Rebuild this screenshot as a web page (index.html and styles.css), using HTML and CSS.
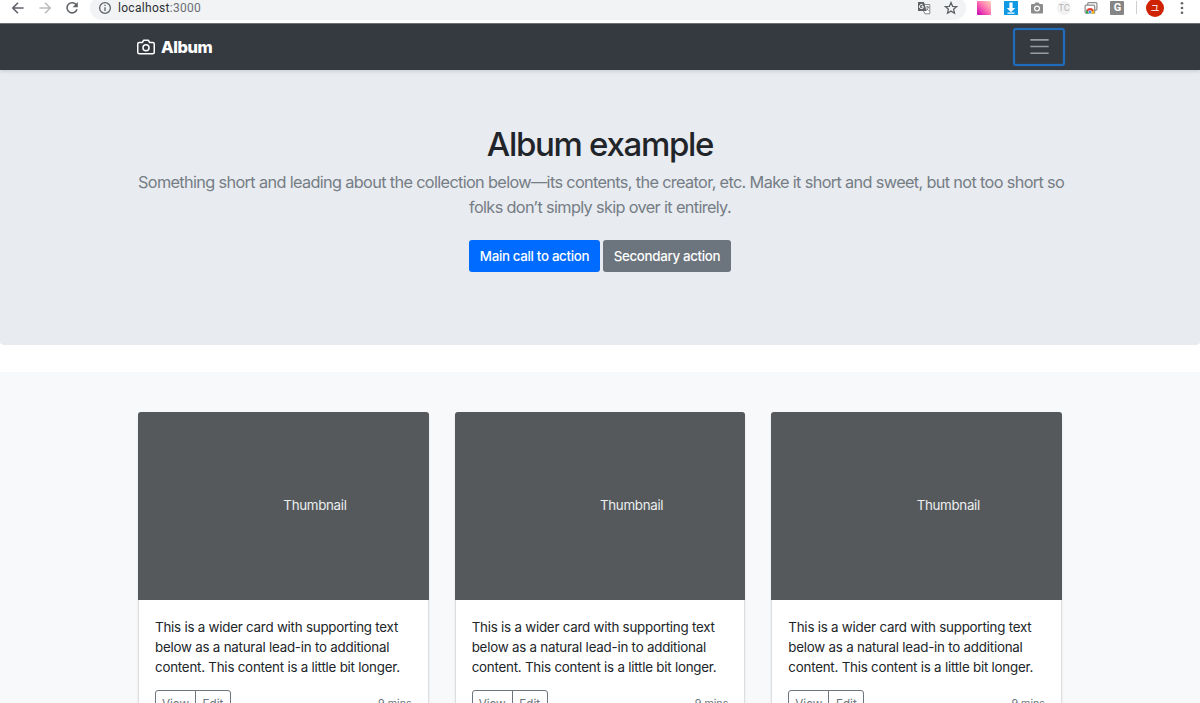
FILE: index.html
```
<!DOCTYPE html>
<html lang="en">
<head>
  <meta charset="UTF-8">
  <meta name="viewport" content="width=device-width, initial-scale=1.0">
  <title>Album example</title>
  <link rel="stylesheet" href="styles.css">
</head>
<body>

  <div class="browser">
    <div class="toolbar">
      <svg class="nav-icon" viewBox="0 0 14 14"><path d="M12.6 7H2M7 1.8 1.8 7 7 12.2"/></svg>
      <svg class="nav-icon disabled" viewBox="0 0 14 14"><path d="M1.4 7H12M7 1.8 12.2 7 7 12.2"/></svg>
      <svg class="nav-icon" viewBox="0 0 14 14"><path d="M11.4 4A5.1 5.1 0 1 0 12 8.3"/><path class="solid" d="M12.8 1v5.2H7.6z"/></svg>
      <div class="address">
        <svg class="info" viewBox="0 0 14 14"><circle cx="7" cy="7" r="5.4"/><path d="M7 6.3v3.8M7 3.7v1.4"/></svg>
        <span class="url">localhost<span class="port">:3000</span></span>
        <svg class="translate" viewBox="0 0 14 14">
          <path d="M6 3.5h6.8v9.3H8L6 9" fill="#fff" stroke="#85898d" stroke-width="1"/>
          <path d="M1 1h6l2.5 9H1z" fill="#5f6368" stroke="none"/>
          <path d="M8.6 6h3.4M10.3 5v1M11.4 6c-.4 1.8-1.2 2.7-2.2 3.4M9.6 7.5l2 2.2" stroke-width=".8"/>
          <path d="M4.5 5.6h1.9a2 2 0 1 1-.6-1.5" stroke="#fff" stroke-width="1"/>
        </svg>
        <svg class="star" viewBox="0 0 14 14"><path d="m7 1.6 1.6 3.7 4 .3-3 2.6.9 4L7 10.1l-3.5 2.1.9-4-3-2.6 4-.3z"/></svg>
      </div>
      <div class="extensions">
        <span class="ext gradient"></span>
        <svg class="ext" viewBox="0 0 14 14"><path fill="#109ae3" d="M0 0h14v14H0z"/><path fill="#fff" d="M5.4 1.5h3.2V7h2.6L7 11.2 2.8 7h2.6zM3.5 11.6h7v1.2h-7z"/></svg>
        <svg class="ext" viewBox="0 0 14 14"><path fill="#8c8c8c" d="M2 3h2.4l1-1.6h3.2l1 1.6H12q1 0 1 1v7.5q0 1-1 1H2q-1 0-1-1V4q0-1 1-1z"/><circle cx="7" cy="7.6" r="3" fill="#fff"/><circle cx="7" cy="7.6" r="1.8" fill="#8c8c8c"/></svg>
        <span class="ext tc">TC</span>
        <svg class="ext" viewBox="0 0 14 14">
          <rect x="3.7" y="1.6" width="9.2" height="7.5" rx="1" fill="#fff" stroke="#8c8c8c" stroke-width="1.2"/>
          <rect x="1.1" y="4.2" width="9.6" height="8" rx="1" fill="#fff" stroke="#8c8c8c" stroke-width="1.2"/>
          <path fill="#34a853" d="M2 12.4V10l1-2 3 4.4z"/><path fill="#fbbc05" d="M9 8l1.1 2v2.4H6z"/><path fill="#e23b2e" d="M2.4 9.4a4 4 0 0 1 7.4 0L6 11z"/><circle cx="6" cy="11" r="1.7" fill="#4285f4" stroke="#fff" stroke-width=".5"/>
        </svg>
        <span class="ext g">G</span>
        <span class="divider"></span>
        <span class="avatar">ユ</span>
        <svg class="dots" viewBox="0 0 4 14"><circle cx="2" cy="2.2" r="1.3"/><circle cx="2" cy="7" r="1.3"/><circle cx="2" cy="11.8" r="1.3"/></svg>
      </div>
    </div>
  </div>

  <header class="navbar">
    <div class="container navbar-inner">
      <a href="#" class="brand">
        <svg viewBox="0 0 24 24"><path d="M23 19a2 2 0 0 1-2 2H3a2 2 0 0 1-2-2V8a2 2 0 0 1 2-2h4l2-3h6l2 3h4a2 2 0 0 1 2 2z"/><circle cx="12" cy="13" r="4"/></svg>
        <strong>Album</strong>
      </a>
      <button class="toggler" type="button" aria-label="Toggle navigation">
        <svg viewBox="0 0 30 30"><path d="M4 7h22M4 15h22M4 23h22"/></svg>
      </button>
    </div>
  </header>

  <main>
    <section class="jumbotron">
      <div class="container">
        <h1>Album example</h1>
        <p class="lead">Something short and leading about the collection below—its contents, the creator, etc. Make it short and sweet, but not too short so<br>folks don’t simply skip over it entirely.</p>
        <div class="actions">
          <a href="#" class="btn primary">Main call to action</a>
          <a href="#" class="btn secondary">Secondary action</a>
        </div>
      </div>
    </section>

    <section class="album">
      <div class="container row">
        <div class="card">
          <div class="thumb"><span>Thumbnail</span></div>
          <div class="card-body">
            <p class="card-text">This is a wider card with supporting text below as a natural lead-in to additional content. This content is a little bit longer.</p>
            <div class="card-footer">
              <div class="btn-group"><button type="button">View</button><button type="button">Edit</button></div>
              <small>9 mins</small>
            </div>
          </div>
        </div>
        <div class="card">
          <div class="thumb"><span>Thumbnail</span></div>
          <div class="card-body">
            <p class="card-text">This is a wider card with supporting text below as a natural lead-in to additional content. This content is a little bit longer.</p>
            <div class="card-footer">
              <div class="btn-group"><button type="button">View</button><button type="button">Edit</button></div>
              <small>9 mins</small>
            </div>
          </div>
        </div>
        <div class="card">
          <div class="thumb"><span>Thumbnail</span></div>
          <div class="card-body">
            <p class="card-text">This is a wider card with supporting text below as a natural lead-in to additional content. This content is a little bit longer.</p>
            <div class="card-footer">
              <div class="btn-group"><button type="button">View</button><button type="button">Edit</button></div>
              <small>9 mins</small>
            </div>
          </div>
        </div>
      </div>
    </section>
  </main>

</body>
</html>
```
FILE: styles.css
```
* {
  box-sizing: border-box;
}
body {
  margin: 0;
  height: 703px;
  overflow: hidden;
  font-family: Inter, "Liberation Sans", sans-serif;
  font-size: 13.34px;
  line-height: 20px;
  color: #212529;
  background: #fff;
}
.container {
  width: 924px;
  margin: 0 auto;
}

/* browser toolbar */
.browser {
  height: 23px;
  overflow: hidden;
}
.toolbar {
  display: flex;
  align-items: center;
  height: 30px;
  margin-top: -7.5px;
  padding-left: 11px;
}
.nav-icon {
  width: 14px;
  height: 14px;
  margin-right: 13px;
  flex: none;
  fill: none;
  stroke: #5f6368;
  stroke-width: 1.6;
}
.nav-icon .solid {
  fill: #5f6368;
  stroke: none;
}
.nav-icon.disabled {
  stroke: #babcbe;
}
.address {
  display: flex;
  align-items: center;
  width: 876px;
  height: 24px;
  margin-left: -2px;
  padding: 0 8px;
  border-radius: 12px;
  background: #f1f3f4;
  flex: none;
}
.address svg {
  width: 14px;
  height: 14px;
  flex: none;
  fill: none;
  stroke: #5f6368;
  stroke-width: 1.3;
}
.url {
  margin: 0 auto 0 6px;
  font-family: Roboto, sans-serif;
  font-size: 12px;
  letter-spacing: 0.3px;
  color: #2c2f33;
}
.port {
  color: #6b6f74;
}
.address .translate {
  margin-right: 13px;
}
.extensions {
  display: flex;
  align-items: center;
  margin-left: 11px;
}
.ext {
  width: 14px;
  height: 14px;
  margin-right: 12.7px;
  flex: none;
  font-family: Roboto, sans-serif;
  line-height: 14px;
  text-align: center;
}
.gradient {
  border-radius: 1px;
  background: linear-gradient(45deg, #c800b4, #ff6eb0 50%, #ffd9b8);
}
.tc {
  border-radius: 50%;
  background: #f2f2f2;
  font-size: 9px;
  color: #b5b5b5;
}
.g {
  border-radius: 1px;
  background: #858585;
  font-size: 11px;
  font-weight: bold;
  color: #fff;
}
.divider {
  width: 1px;
  height: 13px;
  margin: 0 9px 0 -1px;
  background: #cfcfcf;
}
.avatar {
  width: 18px;
  height: 18px;
  border-radius: 50%;
  background: #cf2200;
  font: 9px/18px "Noto Sans CJK JP", sans-serif;
  text-align: center;
  color: #fff;
}
.dots {
  width: 4px;
  height: 14px;
  margin-left: 16px;
  fill: #5f6368;
}

/* navbar */
.navbar {
  position: relative;
  height: 47px;
  border-top: 1px solid #6b7075;
  background: #343a40;
  box-shadow: 0 2px 3px rgba(0, 0, 0, 0.1);
}
.navbar-inner {
  display: flex;
  align-items: center;
  justify-content: space-between;
  width: 930px;
  height: 45px;
}
.brand {
  display: flex;
  align-items: center;
  color: #fff;
  font-size: 16.4px;
  text-decoration: none;
}
.brand strong {
  font-weight: 800;
  letter-spacing: -0.4px;
}
.brand svg {
  width: 18px;
  height: 18px;
  margin: 0 6px 0 2px;
  fill: none;
  stroke: #fff;
  stroke-width: 2;
  stroke-linecap: round;
  stroke-linejoin: round;
}
.toggler {
  display: flex;
  align-items: center;
  justify-content: center;
  width: 52px;
  height: 38px;
  padding: 0;
  border: 2px solid #206bbb;
  border-radius: 3px;
  box-shadow: 0 0 1px #206bbb, inset 0 0 1px #206bbb;
  background: none;
}
.toggler svg {
  width: 27px;
  height: 25px;
  fill: none;
  stroke: #9a9da0;
  stroke-width: 1.9;
}

/* hero */
.jumbotron {
  height: 275px;
  margin-bottom: 27px;
  padding-top: 54px;
  border-radius: 0 0 4px 4px;
  background: #e8ebf0;
  text-align: center;
}
h1 {
  margin: 0 0 6px;
  font-size: 33px;
  font-weight: 500;
  line-height: 40px;
  letter-spacing: -1.3px;
}
.lead {
  margin: 0 0 20px;
  font-size: 16.3px;
  font-weight: 400;
  line-height: 25px;
  letter-spacing: -0.65px;
  color: #757d85;
  white-space: nowrap;
}
.actions {
  display: flex;
  justify-content: center;
  gap: 3px;
}
.btn {
  height: 32px;
  border-radius: 3px;
  font-weight: 500;
  line-height: 32px;
  letter-spacing: -0.33px;
  color: #fff;
  text-decoration: none;
}
.primary {
  width: 131px;
  background: #006bff;
}
.secondary {
  width: 128px;
  background: #6c757d;
}

/* cards */
.album {
  padding-top: 40px;
  background: #f7f9fb;
}
.row {
  display: grid;
  grid-template-columns: repeat(3, minmax(0, 1fr));
  gap: 26px;
}
.card {
  height: 330px;
  border: 1px solid #dcdee0;
  border-radius: 3px;
  background: #fff;
  box-shadow: 0 2px 3px rgba(0, 0, 0, 0.08);
}
.thumb {
  height: 188px;
  margin: -1px -1px 0;
  border-radius: 3px 3px 0 0;
  background: #55595c;
  color: #eceeef;
  line-height: 187px;
  letter-spacing: -0.3px;
}
.thumb span {
  margin-left: 50%;
}
.card-body {
  padding: 17px 16px 0;
}
.card-text {
  margin: 0 0 13px;
  letter-spacing: -0.22px;
}
.card-footer {
  display: flex;
  align-items: center;
  justify-content: space-between;
}
.btn-group {
  display: flex;
}
.btn-group button {
  width: 41px;
  height: 26px;
  padding: 1px 0 0;
  border: 1px solid #6c757d;
  border-radius: 3px 0 0 3px;
  background: none;
  font: 11.7px Inter, sans-serif;
  color: #6c757d;
}
.btn-group button + button {
  width: 36px;
  margin-left: -1px;
  border-radius: 0 3px 3px 0;
}
small {
  padding-top: 1px;
  font-size: 10.7px;
  color: #6c757d;
}
```
